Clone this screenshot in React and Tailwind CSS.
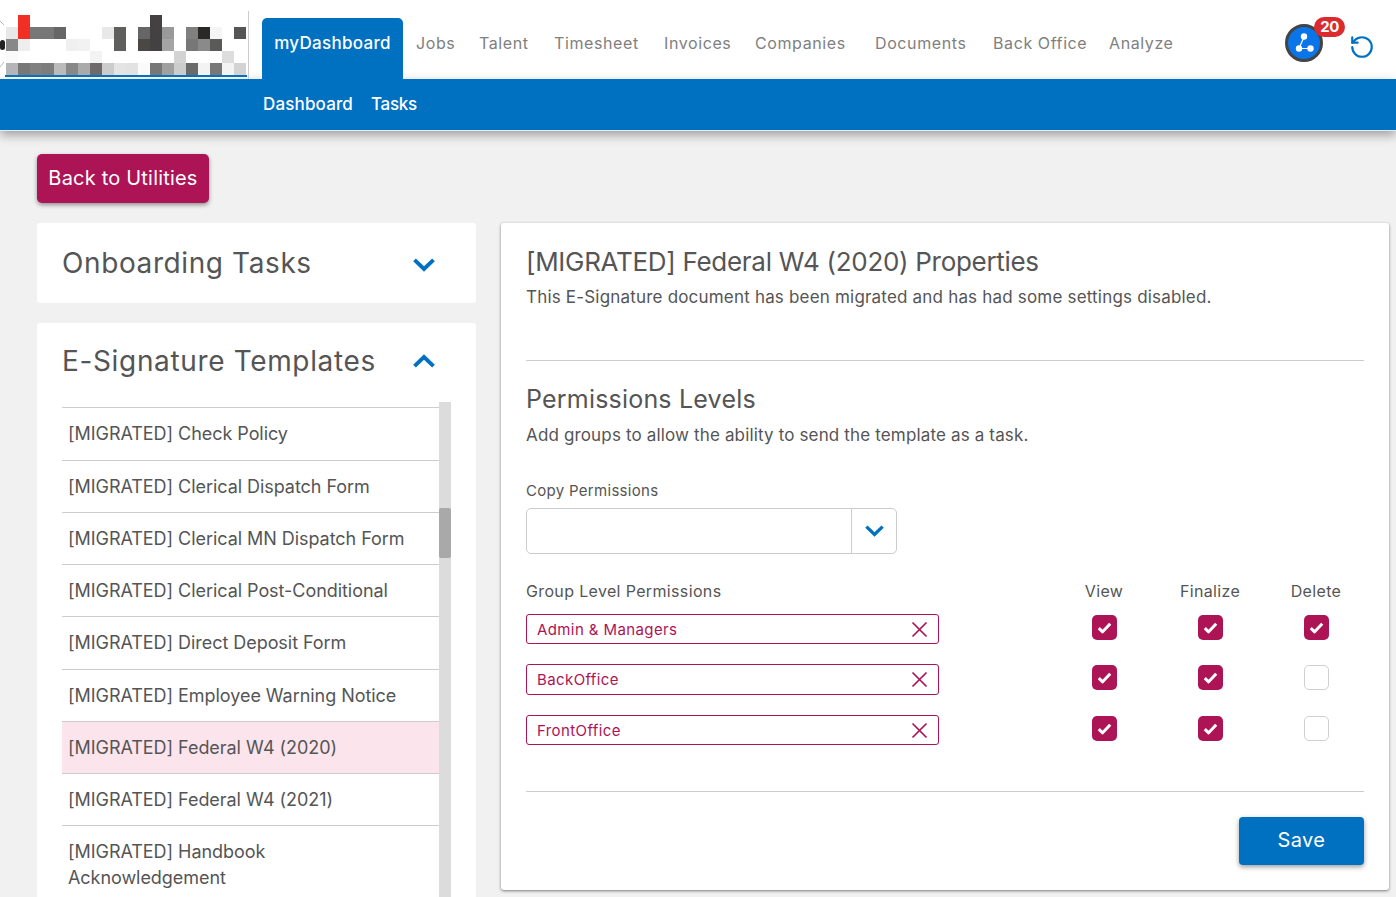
import { RotateCcw } from 'lucide-react';

const FONT = "font-['Inter','Noto_Sans',sans-serif]";

const NAV = [
  { label: 'Jobs', w: 'w-[63px]' },
  { label: 'Talent', w: 'w-[75px]' },
  { label: 'Timesheet', w: 'w-[110px]' },
  { label: 'Invoices', w: 'w-[91px]' },
  { label: 'Companies', w: 'w-[120px]' },
  { label: 'Documents', w: 'w-[118px]' },
  { label: 'Back Office', w: 'w-[116px]' },
  { label: 'Analyze', w: 'w-[70px]' },
];

const TEMPLATES = [
  '[MIGRATED] Check Policy',
  '[MIGRATED] Clerical Dispatch Form',
  '[MIGRATED] Clerical MN Dispatch Form',
  '[MIGRATED] Clerical Post-Conditional',
  '[MIGRATED] Direct Deposit Form',
  '[MIGRATED] Employee Warning Notice',
  '[MIGRATED] Federal W4 (2020)',
  '[MIGRATED] Federal W4 (2021)',
  '[MIGRATED] Handbook Acknowledgement',
];

const GROUPS = [
  { name: 'Admin & Managers', del: true, h: 'h-[30px]', mb: 'mb-5' },
  { name: 'BackOffice', del: false, h: 'h-[31px]', mb: 'mb-5' },
  { name: 'FrontOffice', del: false, h: 'h-[30px]', mb: '' },
];

// pixelated logo, 20 columns x 5 rows of 12px blocks
const LOGO = [
  ['#fff', '#f22f24', '#fff', '#fff', '#fff', '#fff', '#fff', '#fff', '#fff', '#fff', '#fff', '#fff', '#444142', '#fff', '#fff', '#fff', '#fff', '#fff', '#fff', '#fff'],
  ['#e8e8e8', '#f22f24', '#777', '#777', '#666', '#fff', '#fff', '#fff', '#e8e8e8', '#5f5f5d', '#fff', '#666', '#444142', '#999', '#fff', '#808080', '#2b2828', '#f5f5f5', '#fff', '#555'],
  ['#888', '#eee', '#fff', '#fff', '#fff', '#f0f0f0', '#f2f2f2', '#fff', '#fff', '#5f5f5d', '#fff', '#4a4747', '#444142', '#a5a5a5', '#fff', '#777', '#8a8a8a', '#5a5a58', '#fff', '#fff'],
  ['#fafafa', '#fff', '#fff', '#fff', '#fff', '#fff', '#fff', '#f3f3f3', '#fff', '#fff', '#fff', '#fff', '#fff', '#fff', '#d3d3d3', '#fff', '#fff', '#fff', '#ddd', '#fff'],
  ['#b5b5b8', '#777', '#808080', '#7d7d7d', '#bbb', '#888', '#aaa', '#6c6a6a', '#ccc', '#e4e4e4', '#e2e2e2', '#fafafa', '#777', '#a0a0a0', '#ccc', '#6a6a6a', '#f3f3f3', '#777', '#f3f3f3', '#d3d3d3'],
];

const Logo = () => (
  <svg width="248" height="79" viewBox="0 0 248 79" className="block shrink-0">
    <rect x="0" y="40" width="5" height="10" rx="2.5" fill="#222" />
    <path d="M0 21l4 4M0 67l4-5" stroke="#bbb" strokeWidth="1" />
    {LOGO.map((row, y) =>
      row.map((c, x) => <rect key={`${x}-${y}`} x={6 + x * 12} y={15 + y * 12} width="12" height="12" fill={c} />)
    )}
    <rect x="5" y="75" width="242" height="2" fill="#0071c1" />
  </svg>
);

const Chevron = ({ up, className }) => (
  <svg viewBox="0 0 20 13" className={className} fill="none" stroke="#0071c1" strokeWidth="3.6">
    <path d={up ? 'M1.2 11.2L10 2.8l8.8 8.4' : 'M1.2 1.8L10 10.2l8.8-8.4'} />
  </svg>
);

const Check = ({ on }) =>
  on ? (
    <span className="flex items-center justify-center w-[25px] h-[25px] rounded-[5px] bg-[#ac1456]">
      <svg width="15" height="12" viewBox="0 0 15 12" fill="none" stroke="#fff" strokeWidth="3" strokeLinejoin="round">
        <path d="M1.8 6.2l3.8 3.6 7.6-8" />
      </svg>
    </span>
  ) : (
    <span className="block w-[25px] h-[25px] rounded-[5px] bg-white border border-[#d0d0d0]" />
  );

const App = () => {
  return (
    <div className={`${FONT} w-[1396px] h-[897px] overflow-hidden bg-[#f1f1f1] text-[#555]`}>
      {/* Top nav */}
      <header className="flex h-[79px] bg-white">
        <div className="relative w-[249px] shrink-0">
          <Logo />
          <span className="absolute right-0 top-[11px] bottom-0 w-px bg-[#ccc]" />
        </div>
        <div className="flex items-end pl-[13px]">
          <a className="flex w-[141px] h-[61px] pt-[13px] justify-center rounded-t-[5px] bg-[#0071c1] text-white text-[17px] font-medium tracking-[0.3px]">
            myDashboard
          </a>
          <nav className="flex h-[61px] pt-[13px] pl-[13px] text-[16px] tracking-[0.6px] text-[#808080]">
            {NAV.map((n) => (
              <a key={n.label} className={`${n.w} whitespace-nowrap`}>
                {n.label}
              </a>
            ))}
          </nav>
        </div>
        <div className="relative ml-auto w-[111px] shrink-0">
          <div className="absolute left-0 top-[24px] flex items-center justify-center w-[38px] h-[38px] rounded-full border-[3px] border-[#444] bg-[#0a75e8]">
            <svg width="26" height="26" viewBox="0 0 26 26" fill="#fff" stroke="none">
              <path d="M13 7L8 18.5h11.5" fill="none" stroke="#fff" strokeWidth="1.2" />
              <circle cx="13" cy="6.5" r="3.2" />
              <circle cx="8" cy="18.5" r="3.2" />
              <circle cx="19.5" cy="18.5" r="3.2" />
            </svg>
          </div>
          <span className="absolute left-[29px] top-[17px] flex items-center justify-center w-[31px] h-[20px] rounded-full bg-[#dc2b2f] text-white text-[15px] font-bold tracking-[-0.5px]">
            20
          </span>
          <RotateCcw className="absolute left-[64px] top-[34px] w-[26px] h-[26px] text-[#0071c1]" strokeWidth={2} />
        </div>
      </header>

      {/* Sub nav */}
      <div className="flex items-center h-[52px] pl-[263px] gap-[18px] bg-[#0071c1] text-white text-[17px] font-medium tracking-[0.15px] border-b border-[#e5eef5] shadow-[0_4px_10px_rgba(0,0,0,0.35)]">
        <a>Dashboard</a>
        <a className="tracking-[-0.3px]">Tasks</a>
      </div>

      <main className="pl-[37px] pt-[23px]">
        <button className="flex items-center justify-center w-[172px] h-[49px] pb-[2px] rounded-[5px] bg-[#ac1456] text-white text-[20px] tracking-[0.2px] shadow-[0_2px_4px_rgba(0,0,0,0.4)]">
          Back to Utilities
        </button>

        <div className="flex mt-5 gap-[25px]">
          {/* Left column */}
          <div className="w-[439px] shrink-0">
            <section className="flex items-center justify-between h-[80px] pl-[25px] pr-[41px] rounded-[3px] bg-white">
              <h2 className="text-[28px] tracking-[0.6px] leading-none">Onboarding Tasks</h2>
              <Chevron className="w-[22px] h-[14px] mt-1" />
            </section>

            <section className="mt-5 pl-[25px] rounded-[3px] bg-white h-[600px]">
              <div className="flex items-center justify-between h-[79px] pb-1 pr-[41px]">
                <h2 className="text-[28px] tracking-[0.65px] leading-none">E-Signature Templates</h2>
                <Chevron up className="w-[22px] h-[14px]" />
              </div>
              <div className="relative w-[389px]">
                <ul className="w-[377px] pt-[5.4px]">
                  {TEMPLATES.map((t) => (
                    <li
                      key={t}
                      className={`min-h-[52.25px] pl-[6px] pr-[30px] pt-[13px] pb-[11px] border-t border-[#ccc] text-[18px] leading-[26px] tracking-[-0.05px] ${
                        t.includes('(2020)') ? 'bg-[#fce4ec]' : ''
                      }`}
                    >
                      {t}
                    </li>
                  ))}
                </ul>
                {/* Scrollbar */}
                <div className="absolute right-0 top-0 bottom-0 w-[12px] bg-[#dcdcdc]">
                  <div className="mt-[106px] h-[50px] rounded-[2px] bg-[#a9a9a9]" />
                </div>
              </div>
            </section>
          </div>

          {/* Right panel */}
          <section className="w-[888px] h-[667px] shrink-0 px-[25px] pt-[20px] rounded-[3px] bg-white shadow-[0_1px_3px_rgba(0,0,0,0.5)]">
            <h1 className="text-[26px] leading-[38px] tracking-[-0.3px]">[MIGRATED] Federal W4 (2020) Properties</h1>
            <p className="mt-[3px] text-[17px] leading-[26px] tracking-[0.19px]">
              This E-Signature document has been migrated and has had some settings disabled.
            </p>
            <hr className="mt-[50px] border-[#ccc]" />
            <h2 className="mt-[20px] text-[25px] leading-[36px] tracking-[0.2px]">Permissions Levels</h2>
            <p className="mt-[5px] text-[17px] leading-[26px] tracking-[0.15px]">
              Add groups to allow the ability to send the template as a task.
            </p>
            <label className="block mt-[31px] text-[15px] leading-[24px] tracking-[0.3px]">Copy Permissions</label>
            <div className="flex mt-[5px] w-[371px] h-[46px] rounded-[5px] bg-white border border-[#ccc]">
              <span className="flex-1" />
              <span className="flex items-center justify-center w-[45px] border-l border-[#ccc]">
                <Chevron className="w-[19px] h-[12px]" />
              </span>
            </div>

            <div className="flex items-center mt-[25px] h-[24px] text-[16px] tracking-[0.35px]">
              <span className="flex-1">Group Level Permissions</span>
              <span className="w-[106px] text-center">View</span>
              <span className="w-[106px] text-center">Finalize</span>
              <span className="w-[106px] mr-[-5px] text-center">Delete</span>
            </div>

            <div className="mt-[11px]">
              {GROUPS.map((g) => (
                <div key={g.name} className={`flex items-start ${g.mb}`}>
                  <div
                    className={`flex items-center justify-between w-[413px] ${g.h} pl-[10px] pr-[10px] rounded-[3px] border border-[#ac1456] text-[#ac1456] text-[15px] tracking-[0.4px]`}
                  >
                    <span className="pt-[2px]">{g.name}</span>
                    <svg width="17" height="17" viewBox="0 0 17 17" stroke="#ac1456" strokeWidth="1.7">
                      <path d="M1.5 1.5l14 14M15.5 1.5l-14 14" />
                    </svg>
                  </div>
                  <div className="ml-[153px] mt-px flex">
                    <Check on />
                    <span className="ml-[81px]">
                      <Check on />
                    </span>
                    <span className="ml-[81px]">
                      <Check on={g.del} />
                    </span>
                  </div>
                </div>
              ))}
            </div>

            <hr className="mt-[46px] border-[#ccc]" />
            <div className="flex justify-end mt-[25px]">
              <button className="w-[125px] h-[48px] pb-[2px] rounded-[4px] bg-[#0071c1] text-white text-[20px] tracking-[0.4px] shadow-[0_2px_5px_rgba(0,0,0,0.4)]">
                Save
              </button>
            </div>
          </section>
        </div>
      </main>
    </div>
  );
};

export default App;
